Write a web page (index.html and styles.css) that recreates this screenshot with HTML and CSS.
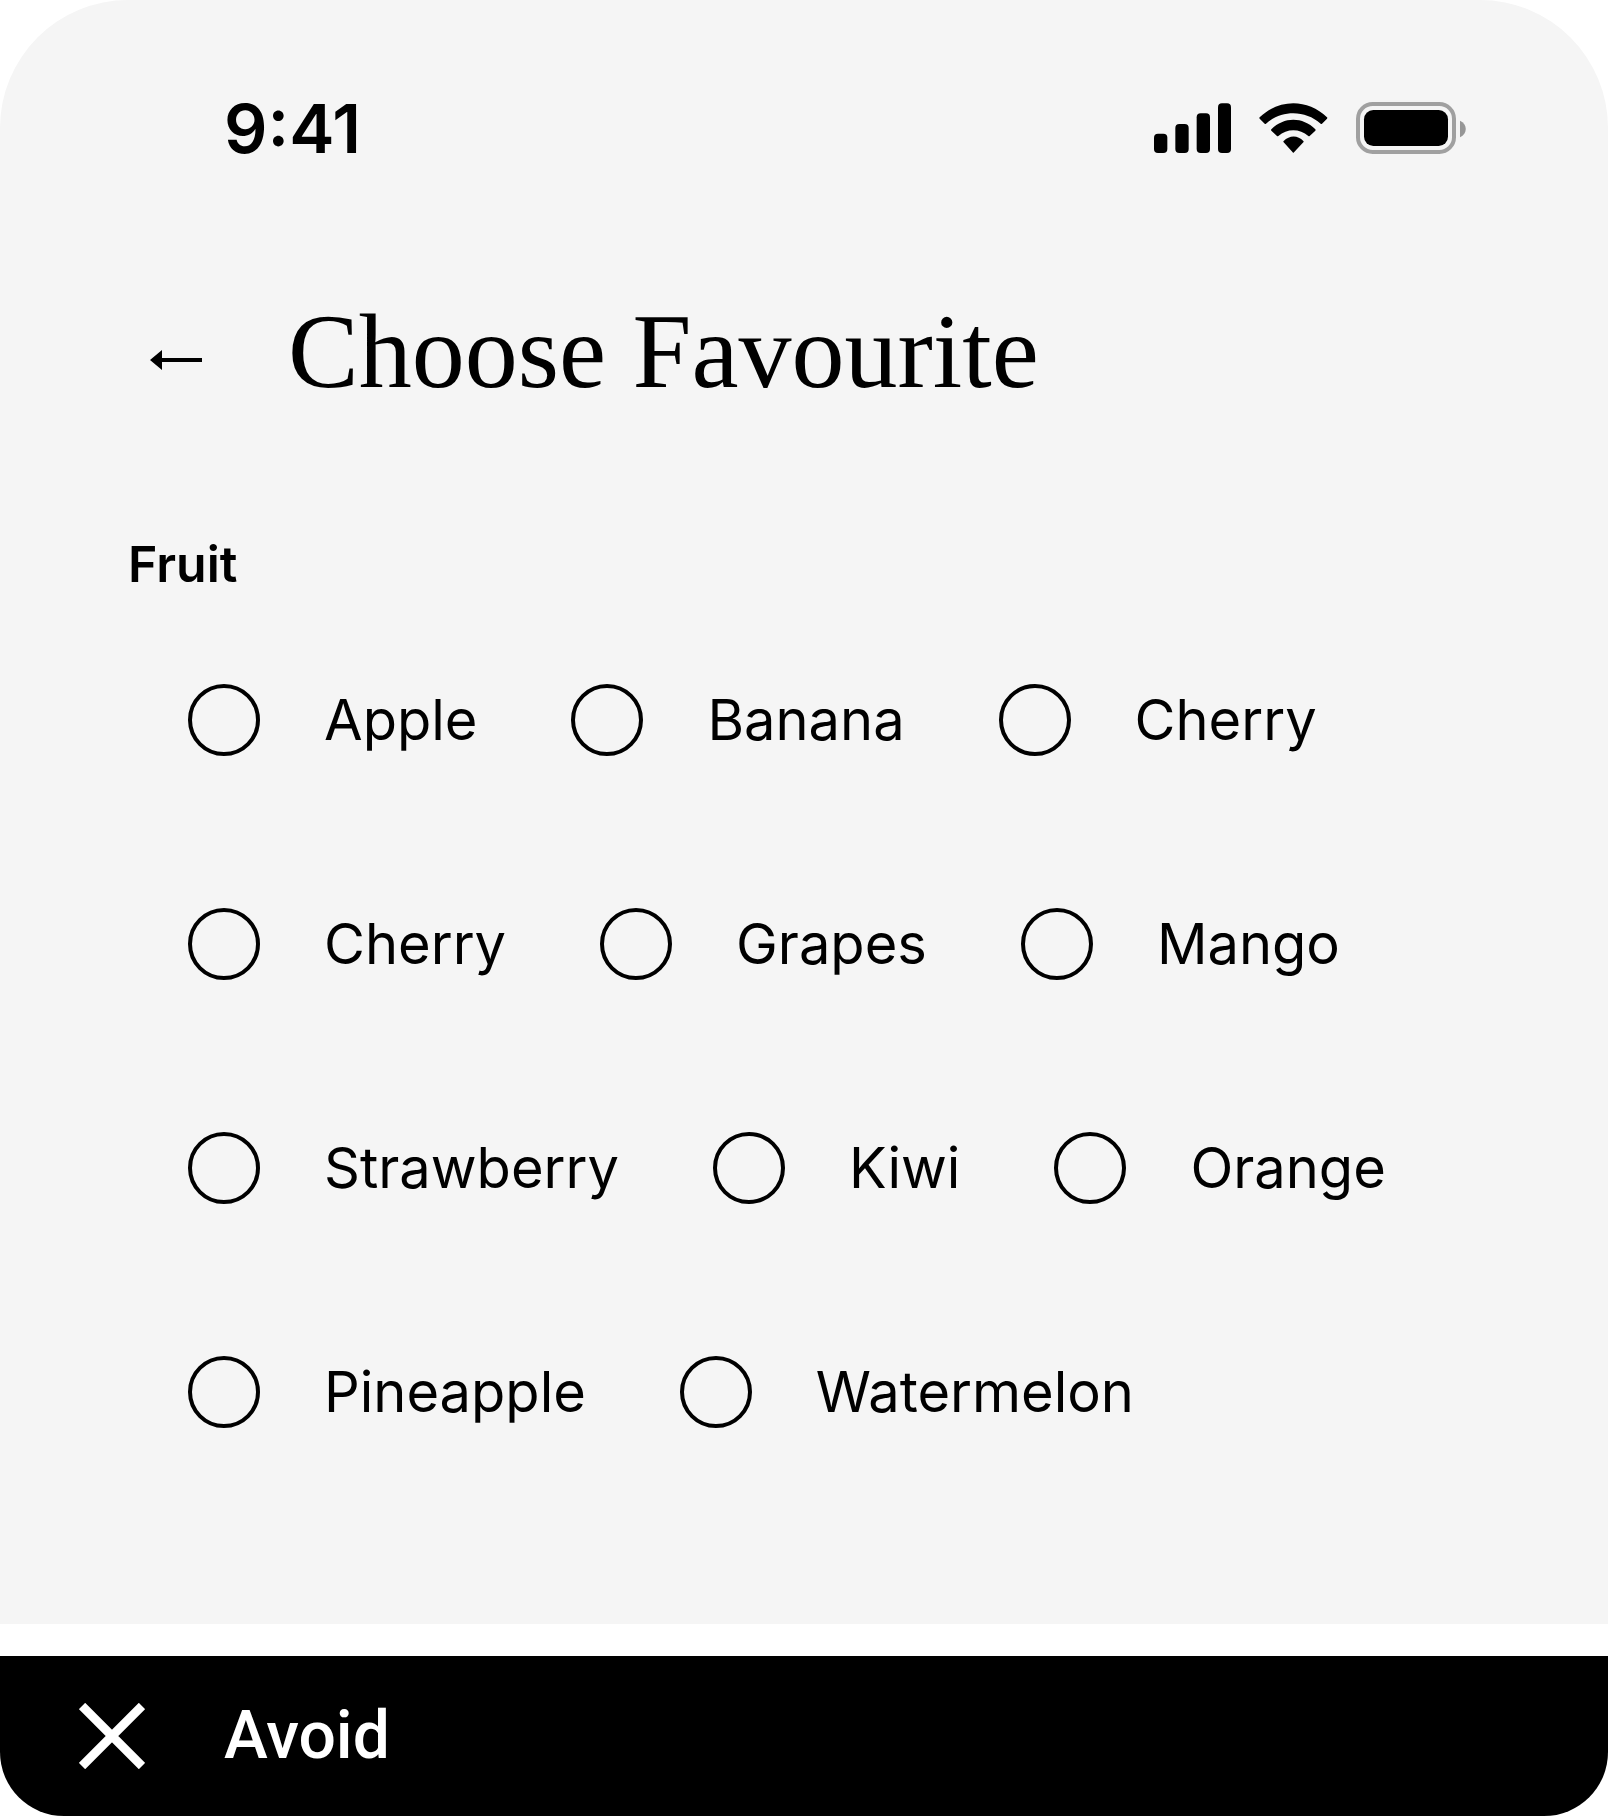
FILE: index.html
```html
<!DOCTYPE html>
<html lang="en">
<head>
<meta charset="utf-8">
<meta name="viewport" content="width=device-width, initial-scale=1">
<title>Choose Favourite</title>
<link rel="stylesheet" href="styles.css">
</head>
<body>
<main class="screen">
  <div class="status-bar">
    <time class="clock">9:41</time>
    <div class="status-icons">
      <svg class="signal" viewBox="0 0 231 150" aria-hidden="true">
        <rect x="0" y="92" width="40" height="58" rx="12"/>
        <rect x="64" y="63" width="40" height="87" rx="12"/>
        <rect x="128" y="31" width="40" height="119" rx="12"/>
        <rect x="192" y="1" width="39" height="149" rx="12"/>
      </svg>
      <svg class="wifi" viewBox="0 0 207 150" aria-hidden="true">
        <path d="M2 43Q0 45 2 47L17 62Q19 64 21 62C67 20 139 20 185 62Q187 64 189 62L204 47Q206 45 204 43C147 -13 59 -13 2 43Z"/>
        <path d="M37 79Q35 81 37 83L54 99Q56 101 58 99C84 76 122 76 148 99Q150 101 152 99L169 83Q171 81 169 79C131 41 75 41 37 79Z"/>
        <path d="M74 114Q72 116 74 118L101 148Q103 151 105 148L133 118Q135 116 133 114C117 96 91 96 74 114Z"/>
      </svg>
      <svg class="battery" viewBox="0 0 330 156" aria-hidden="true">
        <rect class="battery-case" x="6" y="6" width="288" height="144" rx="44"/>
        <rect x="24" y="24" width="252" height="108" rx="28"/>
        <path class="battery-cap" d="M312 56C335 66 335 96 312 106Z"/>
      </svg>
    </div>
  </div>

  <header class="header">
    <button class="back" type="button" aria-label="Back">
      <svg class="arrow" viewBox="0 0 52 20" aria-hidden="true">
        <path d="M0 10L12 0V8H52V12H12V20Z"/>
      </svg>
    </button>
    <h1 class="title">Choose Favourite</h1>
  </header>

  <fieldset class="group">
    <legend class="group-name">Fruit</legend>
    <div class="options">
      <label class="option"><input class="radio" type="radio" name="fruit" value="apple">Apple</label>
      <label class="option"><input class="radio" type="radio" name="fruit" value="banana">Banana</label>
      <label class="option"><input class="radio" type="radio" name="fruit" value="cherry">Cherry</label>
      <label class="option"><input class="radio" type="radio" name="fruit" value="cherry-2">Cherry</label>
      <label class="option"><input class="radio" type="radio" name="fruit" value="grapes">Grapes</label>
      <label class="option"><input class="radio" type="radio" name="fruit" value="mango">Mango</label>
      <label class="option"><input class="radio" type="radio" name="fruit" value="strawberry">Strawberry</label>
      <label class="option"><input class="radio" type="radio" name="fruit" value="kiwi">Kiwi</label>
      <label class="option"><input class="radio" type="radio" name="fruit" value="orange">Orange</label>
      <label class="option"><input class="radio" type="radio" name="fruit" value="pineapple">Pineapple</label>
      <label class="option"><input class="radio" type="radio" name="fruit" value="watermelon">Watermelon</label>
    </div>
  </fieldset>
</main>

<footer class="footer">
  <button class="avoid" type="button">
    <svg class="cross" viewBox="0 0 66 66" aria-hidden="true">
      <path d="M3 3L63 63M63 3L3 63"/>
    </svg>
    Avoid
  </button>
</footer>
</body>
</html>
```

FILE: styles.css
```css
* {
  box-sizing: border-box;
}

body {
  margin: 0;
  display: flex;
  flex-direction: column;
  gap: 32px;
  background: #fff;
  color: #000;
  font-family: Inter, "Liberation Sans", sans-serif;
}

.screen {
  padding: 88px 128px 196px;
  border-radius: 128px 128px 0 0;
  background: #f5f5f5;
}

.status-bar {
  display: flex;
  align-items: center;
  justify-content: space-between;
  height: 80px;
  padding: 0 14px 0 96px;
}

.clock {
  font-size: 68px;
  font-weight: 600;
  line-height: 80px;
}

.status-icons {
  display: flex;
  align-items: center;
  gap: 28px;
}

.signal {
  width: 77px;
  height: 50px;
}

.wifi {
  width: 69px;
  height: 50px;
}

.battery {
  width: 110px;
  height: 52px;
}

.battery-case {
  fill: none;
  stroke: #a0a0a0;
  stroke-width: 12;
}

.battery-cap {
  fill: #969696;
}

.header {
  display: flex;
  align-items: center;
  gap: 64px;
  margin-top: 128px;
}

.back {
  display: flex;
  align-items: center;
  justify-content: center;
  width: 96px;
  height: 96px;
  padding: 0;
  border: 0;
  background: none;
}

.arrow {
  width: 52px;
  height: 20px;
}

.title {
  margin: 0;
  padding-bottom: 16px;
  font-family: "Liberation Serif", serif;
  font-size: 106px;
  font-weight: 400;
  line-height: 112px;
}

.group {
  min-width: 0;
  margin: 108px 0 0;
  padding: 0;
  border: 0;
}

.group-name {
  padding: 0;
  font-size: 50px;
  font-weight: 600;
  line-height: 64px;
}

.options {
  display: flex;
  flex-wrap: wrap;
  gap: 152px 94px;
  padding: 88px 0 0 60px;
}

.option {
  display: flex;
  align-items: center;
  gap: 64px;
  font-size: 56px;
  line-height: 72px;
}

.radio {
  appearance: none;
  flex: none;
  width: 72px;
  height: 72px;
  margin: 0;
  border: 4px solid #000;
  border-radius: 50%;
}

.radio:checked {
  box-shadow: inset 0 0 0 14px #f5f5f5;
  background: #000;
}

.footer {
  display: flex;
  padding: 40px 79px;
  border-radius: 0 0 64px 64px;
  background: #000;
}

.avoid {
  display: flex;
  align-items: center;
  gap: 79px;
  height: 80px;
  padding: 0;
  border: 0;
  background: none;
  color: #fff;
  font-family: Roboto, sans-serif;
  font-size: 66px;
  font-weight: 500;
  line-height: 80px;
}

.cross {
  width: 66px;
  height: 66px;
  fill: none;
  stroke: #fff;
  stroke-width: 9;
}
```
